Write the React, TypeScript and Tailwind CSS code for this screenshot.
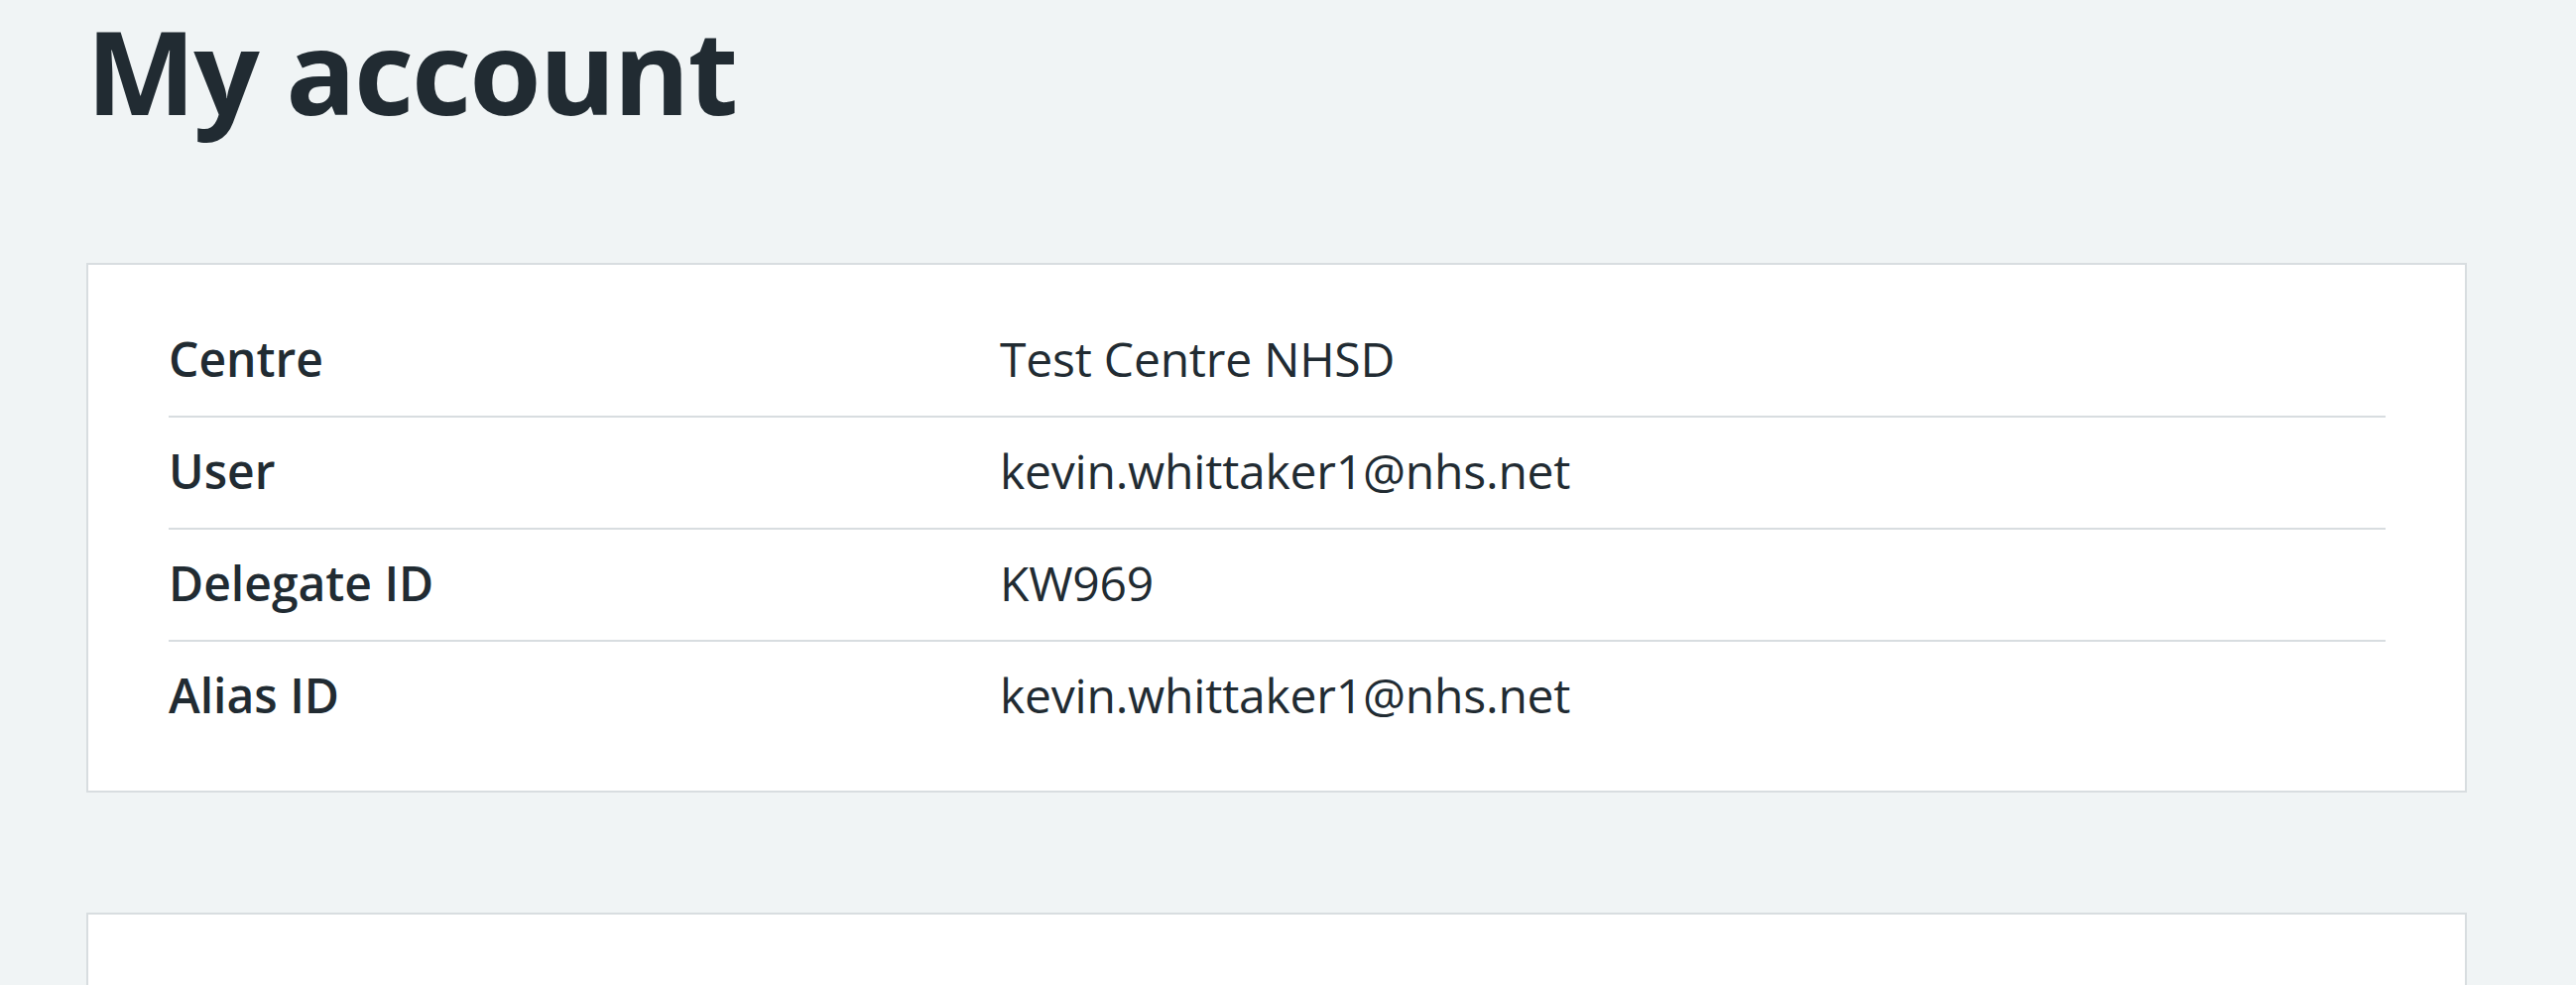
import React from "react";

const rows: { key: string; value: string }[] = [
  { key: "Centre", value: "Test Centre NHSD" },
  { key: "User", value: "kevin.whittaker1@nhs.net" },
  { key: "Delegate ID", value: "KW969" },
  { key: "Alias ID", value: "kevin.whittaker1@nhs.net" },
];

export default function App() {
  return (
    <div
      className="min-h-[993px] w-full bg-[#f0f4f5] text-[#212b32] overflow-hidden"
      style={{ fontFamily: '"Open Sans", "Noto Sans", Arial, sans-serif' }}
    >
      <div className="ml-[87px] w-[2400px]">
        <h1 className="m-0 text-[117px] leading-[141px] font-bold tracking-[-2px]">My account</h1>

        <div className="mt-[124px] bg-white border-2 border-[#d8dde0] pl-[81px] pr-[80px] pt-[41px] pb-[39px]">
          <dl className="m-0">
            {rows.map((r, i) => (
              <div
                key={r.key}
                className={
                  i < rows.length - 1
                    ? "flex pt-[18px] pb-[21px] border-b-2 border-[#d8dde0]"
                    : "flex pt-[18px] pb-[21px]"
                }
              >
                <dt className="w-[838px] shrink-0 text-[48px] leading-[72px] font-semibold">{r.key}</dt>
                <dd className="m-0 text-[48px] leading-[72px] font-normal tracking-[-0.2px]">{r.value}</dd>
              </div>
            ))}
          </dl>
        </div>

        <div className="mt-[121px] h-[300px] bg-white border-2 border-[#d8dde0]" />
      </div>
    </div>
  );
}
